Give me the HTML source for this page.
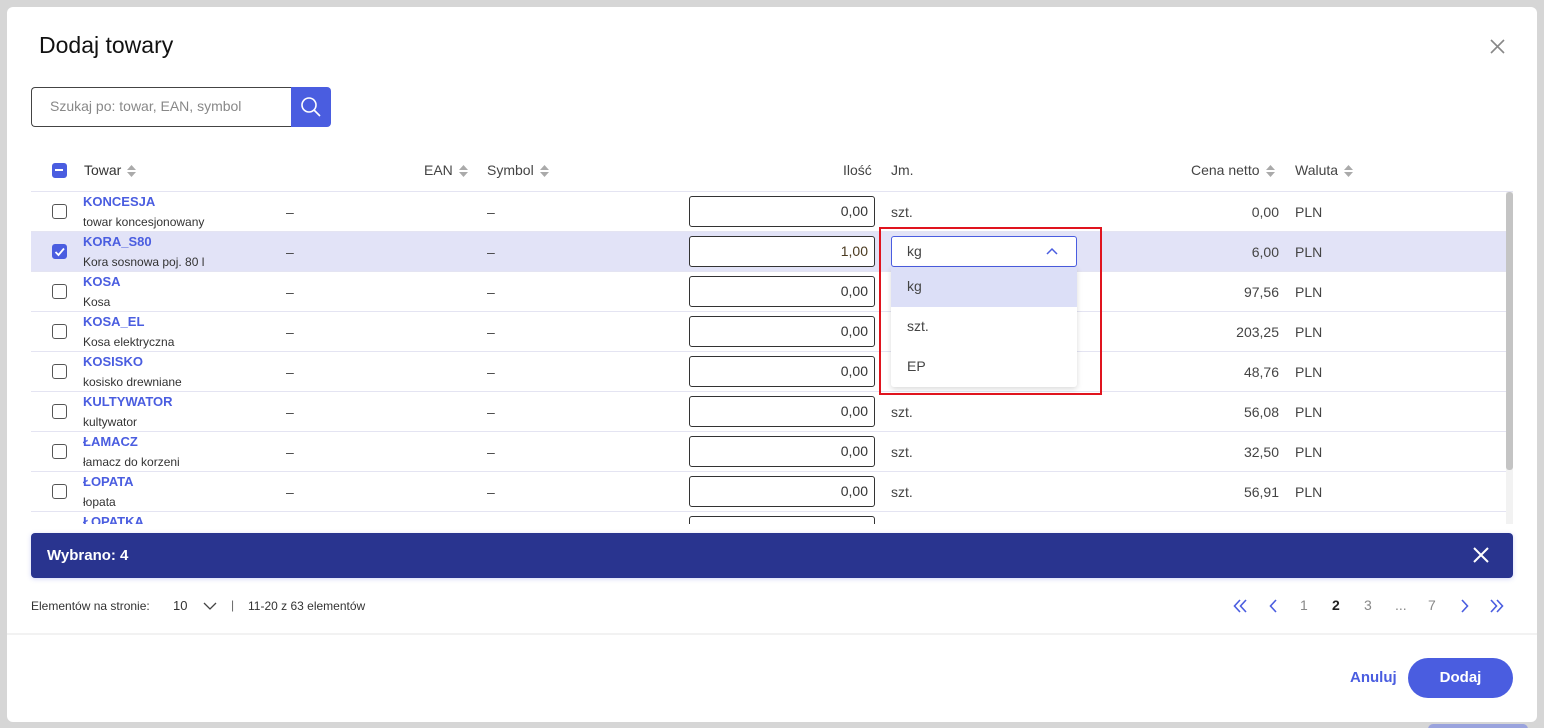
<!DOCTYPE html>
<html><head><meta charset="utf-8">
<style>
*{box-sizing:border-box;margin:0;padding:0}
html,body{width:1544px;height:728px;overflow:hidden}
body{background:#d6d6d6;font-family:"Liberation Sans",sans-serif;position:relative;color:#333}
.abs{position:absolute}
.modal{position:absolute;left:7px;top:7px;width:1530px;height:715px;background:#fff;border-radius:6px}
.t{position:absolute;white-space:nowrap}
.cb{position:absolute;left:52px;width:15px;height:15px;border:1.5px solid #555;border-radius:3px;background:#fff}
.cb.on{background:#4a5de0;border-color:#4a5de0}
.name{position:absolute;left:83px;font-size:13px;color:#4a5de0;font-weight:bold}
.desc{position:absolute;left:83px;font-size:12px;color:#333}
.qty{position:absolute;left:689px;width:186px;height:31px;border:1px solid #333;border-radius:3px;font-size:14px;text-align:right;padding-right:6px;line-height:29px;background:#fff}
.row{position:absolute;left:31px;width:1475px;height:40px;border-bottom:1px solid #e4e4f2}
.sm{font-size:14px;color:#444}
.sort{display:inline-block;width:9px;height:12px;vertical-align:middle;margin-left:6px}
</style></head><body>
<div class="modal"></div>
<div class="t" style="left:39px;top:32px;font-size:23px;color:#111">Dodaj towary</div>
<svg class="abs" style="left:1490px;top:39px" width="15" height="15"><path d="M1 1L14 14M14 1L1 14" stroke="#888" stroke-width="1.6"/></svg>
<div class="abs" style="left:31px;top:87px;width:262px;height:40px;border:1px solid #444;border-right:none;border-radius:4px 0 0 4px"></div>
<div class="t" style="left:50px;top:98px;font-size:14px;color:#888">Szukaj po: towar, EAN, symbol</div>
<div class="abs" style="left:291px;top:87px;width:40px;height:40px;background:#4a5de0;border-radius:0 4px 4px 0"></div>
<svg class="abs" style="left:300px;top:96px" width="22" height="22"><circle cx="9" cy="9" r="7" stroke="#fff" stroke-width="1.6" fill="none"/><path d="M14 14L20 20" stroke="#fff" stroke-width="1.6"/></svg>
<!-- header -->
<div class="cb on" style="top:163px"><div class="abs" style="left:2px;top:5px;width:8px;height:2px;background:#fff"></div></div>
<svg width="0" height="0" style="position:absolute"><defs><g id="s"><path d="M0 5L4.5 0L9 5Z M0 7L4.5 12L9 7Z" fill="#aaa"/></g></defs></svg>
<div class="t sm" style="left:84px;top:162px;color:#333">Towar<svg class="sort"><use href="#s"/></svg></div>
<div class="t sm" style="left:424px;top:162px">EAN<svg class="sort"><use href="#s"/></svg></div>
<div class="t sm" style="left:487px;top:162px">Symbol<svg class="sort"><use href="#s"/></svg></div>
<div class="t sm" style="left:843px;top:162px">Ilość</div>
<div class="t sm" style="left:891px;top:162px">Jm.</div>
<div class="t sm" style="left:1191px;top:162px">Cena netto<svg class="sort"><use href="#s"/></svg></div>
<div class="t sm" style="left:1295px;top:162px">Waluta<svg class="sort"><use href="#s"/></svg></div>
<div class="abs" style="left:31px;top:191px;width:1482px;height:1px;background:#e4e4f2"></div>
<div class="abs" style="left:31px;top:192px;width:1482px;height:332px;overflow:hidden">
<div style="position:absolute;left:-31px;top:-192px;width:1544px;height:728px">
<div class="row" style="top:192px"></div>
<div class="row" style="top:232px;background:#e2e3f7"></div>
<div class="row" style="top:272px"></div><div class="row" style="top:312px"></div><div class="row" style="top:352px"></div><div class="row" style="top:392px"></div><div class="row" style="top:432px"></div><div class="row" style="top:472px"></div><div class="row" style="top:512px"></div>

<div class="cb" style="top:204px"></div><div class="name" style="top:194px">KONCESJA</div><div class="desc" style="top:215px">towar koncesjonowany</div>
<div class="cb on" style="top:244px"><svg class="abs" style="left:1px;top:1px" width="11" height="11"><path d="M1.5 6L4.5 9L10 2.5" stroke="#fff" stroke-width="1.8" fill="none"/></svg></div><div class="name" style="top:234px">KORA_S80</div><div class="desc" style="top:255px">Kora sosnowa poj. 80 l</div>
<div class="cb" style="top:284px"></div><div class="name" style="top:274px">KOSA</div><div class="desc" style="top:295px">Kosa</div>
<div class="cb" style="top:324px"></div><div class="name" style="top:314px">KOSA_EL</div><div class="desc" style="top:335px">Kosa elektryczna</div>
<div class="cb" style="top:364px"></div><div class="name" style="top:354px">KOSISKO</div><div class="desc" style="top:375px">kosisko drewniane</div>
<div class="cb" style="top:404px"></div><div class="name" style="top:394px">KULTYWATOR</div><div class="desc" style="top:415px">kultywator</div>
<div class="cb" style="top:444px"></div><div class="name" style="top:434px">ŁAMACZ</div><div class="desc" style="top:455px">łamacz do korzeni</div>
<div class="cb" style="top:484px"></div><div class="name" style="top:474px">ŁOPATA</div><div class="desc" style="top:495px">łopata</div>
<div class="cb" style="top:524px"></div><div class="name" style="top:514px">ŁOPATKA</div>

<div class="t sm" style="left:286px;top:204px">–</div><div class="t sm" style="left:487px;top:204px">–</div>
<div class="t sm" style="left:286px;top:244px">–</div><div class="t sm" style="left:487px;top:244px">–</div>
<div class="t sm" style="left:286px;top:284px">–</div><div class="t sm" style="left:487px;top:284px">–</div>
<div class="t sm" style="left:286px;top:324px">–</div><div class="t sm" style="left:487px;top:324px">–</div>
<div class="t sm" style="left:286px;top:364px">–</div><div class="t sm" style="left:487px;top:364px">–</div>
<div class="t sm" style="left:286px;top:404px">–</div><div class="t sm" style="left:487px;top:404px">–</div>
<div class="t sm" style="left:286px;top:444px">–</div><div class="t sm" style="left:487px;top:444px">–</div>
<div class="t sm" style="left:286px;top:484px">–</div><div class="t sm" style="left:487px;top:484px">–</div>

<div class="qty" style="top:196px">0,00</div>
<div class="qty" style="top:236px;color:#4a3a20">1,00</div>
<div class="qty" style="top:276px">0,00</div><div class="qty" style="top:316px">0,00</div><div class="qty" style="top:356px">0,00</div><div class="qty" style="top:396px">0,00</div><div class="qty" style="top:436px">0,00</div><div class="qty" style="top:476px">0,00</div><div class="qty" style="top:516px">0,00</div>

<div class="t sm" style="left:891px;top:204px">szt.</div>
<div class="t sm" style="left:891px;top:404px">szt.</div><div class="t sm" style="left:891px;top:444px">szt.</div><div class="t sm" style="left:891px;top:484px">szt.</div>

<div class="t sm" style="left:1179px;width:100px;text-align:right;top:204px">0,00</div>
<div class="t sm" style="left:1179px;width:100px;text-align:right;top:244px">6,00</div>
<div class="t sm" style="left:1179px;width:100px;text-align:right;top:284px">97,56</div>
<div class="t sm" style="left:1179px;width:100px;text-align:right;top:324px">203,25</div>
<div class="t sm" style="left:1179px;width:100px;text-align:right;top:364px">48,76</div>
<div class="t sm" style="left:1179px;width:100px;text-align:right;top:404px">56,08</div>
<div class="t sm" style="left:1179px;width:100px;text-align:right;top:444px">32,50</div>
<div class="t sm" style="left:1179px;width:100px;text-align:right;top:484px">56,91</div>
<div class="t sm" style="left:1295px;top:204px">PLN</div><div class="t sm" style="left:1295px;top:244px">PLN</div><div class="t sm" style="left:1295px;top:284px">PLN</div><div class="t sm" style="left:1295px;top:324px">PLN</div><div class="t sm" style="left:1295px;top:364px">PLN</div><div class="t sm" style="left:1295px;top:404px">PLN</div><div class="t sm" style="left:1295px;top:444px">PLN</div><div class="t sm" style="left:1295px;top:484px">PLN</div>
<div class="abs" style="left:1506px;top:192px;width:7px;height:332px;background:#f2f2f2"></div>
<div class="abs" style="left:1506px;top:192px;width:7px;height:278px;background:#c4c4c4;border-radius:3px"></div>
</div></div>
<!-- dropdown -->
<div class="abs" style="left:891px;top:236px;width:186px;height:31px;border:1.5px solid #4a5de0;border-radius:3px;background:#fff"></div>
<div class="t sm" style="left:907px;top:243px">kg</div>
<svg class="abs" style="left:1046px;top:247px" width="12" height="8"><path d="M1 7L6 2L11 7" stroke="#4a5de0" stroke-width="1.5" fill="none"/></svg>
<div class="abs" style="left:891px;top:267px;width:186px;height:120px;background:#fff;box-shadow:0 2px 6px rgba(0,0,0,.15);border-radius:0 0 3px 3px"></div>
<div class="abs" style="left:891px;top:267px;width:186px;height:40px;background:#dcdff7"></div>
<div class="t sm" style="left:907px;top:278px">kg</div>
<div class="t sm" style="left:907px;top:318px">szt.</div>
<div class="t sm" style="left:907px;top:358px">EP</div>
<div class="abs" style="left:879px;top:227px;width:223px;height:168px;border:2px solid #e0141e"></div>
<!-- selection bar -->
<div class="abs" style="left:31px;top:533px;width:1482px;height:45px;background:#29348f;border-radius:4px;box-shadow:0 1px 5px rgba(74,93,224,.25)"></div>
<div class="t" style="left:47px;top:547px;font-size:15px;color:#fff;font-weight:bold">Wybrano: 4</div>
<svg class="abs" style="left:1473px;top:547px" width="16" height="16"><path d="M1 1L15 15M15 1L1 15" stroke="#fff" stroke-width="2"/></svg>
<!-- pagination -->
<div class="t" style="left:31px;top:599px;font-size:12px;color:#333">Elementów na stronie:</div>
<div class="t" style="left:173px;top:598px;font-size:13px;color:#333">10</div>
<svg class="abs" style="left:203px;top:602px" width="14" height="8"><path d="M1 1L7 7L13 1" stroke="#444" stroke-width="1.3" fill="none"/></svg>
<div class="t" style="left:231px;top:598px;font-size:12px;color:#666">|</div>
<div class="t" style="left:248px;top:599px;font-size:12px;color:#333">11-20 z 63 elementów</div>
<svg class="abs" style="left:1233px;top:598px" width="280" height="16" fill="none" stroke="#4a5de0" stroke-width="1.6">
<path d="M7 2L1.5 8L7 14M13 2L7.5 8L13 14"/><path d="M43 2L37.5 8L43 14"/>
<path d="M229 2L234.5 8L229 14"/><path d="M258 2L263.5 8L258 14M264 2L269.5 8L264 14"/></svg>
<div class="t" style="left:1300px;top:597px;font-size:14px;color:#888">1</div>
<div class="t" style="left:1332px;top:597px;font-size:14px;color:#222;font-weight:bold">2</div>
<div class="t" style="left:1364px;top:597px;font-size:14px;color:#888">3</div>
<div class="t" style="left:1395px;top:597px;font-size:14px;color:#888">...</div>
<div class="t" style="left:1428px;top:597px;font-size:14px;color:#888">7</div>
<div class="abs" style="left:7px;top:633px;width:1530px;height:2px;background:#f2f2f2"></div>
<div class="t" style="left:1350px;top:669px;font-size:15px;color:#4a5de0;font-weight:bold">Anuluj</div>
<div class="abs" style="left:1408px;top:658px;width:105px;height:40px;border-radius:20px;background:#4a5de0"></div>
<div class="t" style="left:1408px;top:669px;width:105px;text-align:center;font-size:15px;color:#fff;font-weight:bold">Dodaj</div>
<div class="abs" style="left:1428px;top:724px;width:100px;height:10px;border-radius:10px;background:#9aa3dd"></div>
</body></html>
